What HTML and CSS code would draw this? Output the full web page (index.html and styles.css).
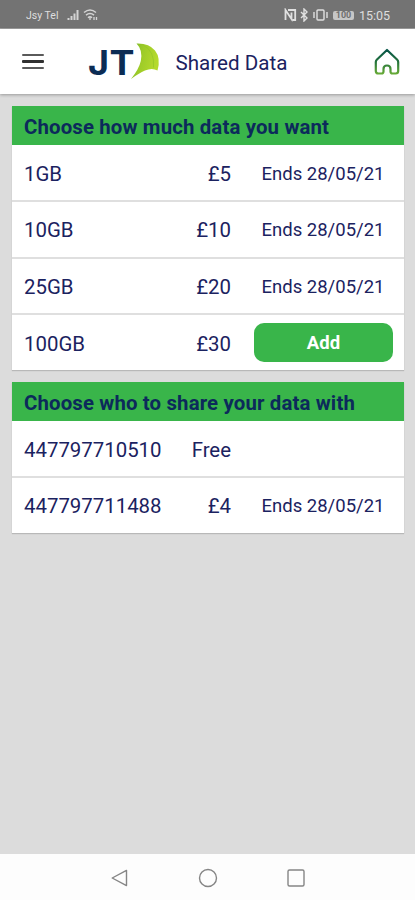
FILE: index.html
```html
<!DOCTYPE html>
<html lang="en">
<head>
<meta charset="utf-8">
<title>Shared Data</title>
<link rel="stylesheet" href="styles.css">
</head>
<body>
<div class="status">
  <span class="carrier">Jsy Tel</span>
  <svg class="signal" width="32" height="14" viewBox="0 0 32 14" fill="none" stroke="#d4d4d4">
    <path d="M1.500 12v-2M4.500 12V8M7.500 12V5.500M10.500 12V2" stroke-width="2"/>
    <path d="M17 4.500q6-5 12 0M19 7.200q4-3.300 8 0M21 9.700q2-1.700 4 0" stroke-width="1.500"/>
    <path d="M23 10v2M27 9v3M29.500 9v3" stroke-width="1.300"/>
  </svg>
  <div class="status-right">
    <svg width="46" height="14" viewBox="0 0 46 14" fill="none" stroke="#e0e0e0" stroke-width="1.400">
      <path d="M1.500 12V2l6 9V4.500M4 2h7.200V12H8.500" stroke-width="1.800"/>
      <path d="m17 4 6 6-3 3V1l3 3-6 6"/>
      <rect x="33" y="2" width="7" height="10" rx="1"/>
      <path d="M30 4v6M43 4v6"/>
    </svg>
    <span class="battery">100</span>
    <span class="clock">15:05</span>
  </div>
</div>
<header class="header">
  <div class="menu"><i></i><i></i><i></i></div>
  <svg class="logo" width="76" height="42" viewBox="0 0 76 42">
    <defs>
      <linearGradient id="leaf" x1="0" y1="0" x2="1" y2="0.300">
        <stop offset="0" stop-color="#75b82a"/><stop offset="0.450" stop-color="#9dcb28"/><stop offset="1" stop-color="#b5da2c"/>
      </linearGradient>
    </defs>
    <text class="logo-text" x="2" y="34.500" textLength="21" lengthAdjust="spacingAndGlyphs">J</text>
    <text class="logo-text" x="23.500" y="34.500" textLength="25" lengthAdjust="spacingAndGlyphs">T</text>
    <path fill="url(#leaf)" d="M50.500 3.500Q63 3 69 10.500Q75 18 71.500 30.500Q66 27.500 59 30.500Q53 33 45 39Q53 29 54.800 21Q57 10 50.500 3.500Z"/>
    <path fill="none" stroke="#92c627" stroke-width="0.700" d="M57 5Q69 11 67.500 27.500"/>
  </svg>
  <h1 class="title">Shared Data</h1>
  <svg class="home" width="28" height="30" viewBox="0 0 28 30" fill="none">
    <defs>
      <linearGradient id="roof" x1="0" y1="0" x2="0" y2="1">
        <stop offset="0" stop-color="#075548"/><stop offset="0.500" stop-color="#23723c"/><stop offset="1" stop-color="#65a936"/>
      </linearGradient>
    </defs>
    <path stroke="url(#roof)" stroke-width="2.200" stroke-linejoin="round" d="M14 3 24 12.500Q25.200 13.700 25.200 15V24Q25.200 26.500 22.700 26.500H19.500Q17.500 26.500 17.500 24.500V22Q17.500 18.500 14 18.500T10.500 22V24.500Q10.500 26.500 8.500 26.500H5.300Q2.800 26.500 2.800 24V15Q2.800 13.700 4 12.500Z"/>
  </svg>
</header>
<main class="content">
  <section class="panel">
    <h2>Choose how much data you want</h2>
    <div class="row"><span>1GB</span><span class="price">£5</span><span class="end">Ends 28/05/21</span></div>
    <div class="row"><span>10GB</span><span class="price">£10</span><span class="end">Ends 28/05/21</span></div>
    <div class="row"><span>25GB</span><span class="price">£20</span><span class="end">Ends 28/05/21</span></div>
    <div class="row"><span>100GB</span><span class="price">£30</span><button class="add">Add</button></div>
  </section>
  <section class="panel">
    <h2>Choose who to share your data with</h2>
    <div class="row"><span>447797710510</span><span class="price">Free</span></div>
    <div class="row"><span>447797711488</span><span class="price">£4</span><span class="end">Ends 28/05/21</span></div>
  </section>
</main>
<nav class="nav">
  <svg width="20" height="20" viewBox="0 0 20 20"><path d="M16.500 2.400V17.600L2.200 10Z"/></svg>
  <svg width="20" height="20" viewBox="0 0 20 20"><circle cx="10" cy="10" r="8.500"/></svg>
  <svg width="20" height="20" viewBox="0 0 20 20"><rect x="2" y="2" width="16" height="16" rx="1.500"/></svg>
</nav>
</body>
</html>
```

FILE: styles.css
```css
* { box-sizing: border-box; }
body {
  margin: 0;
  height: 900px;
  display: flex;
  flex-direction: column;
  overflow: hidden;
  background: #dcdcdc;
  color: #1b2260;
  font-family: Roboto, sans-serif;
}
.status {
  height: 29px;
  flex: none;
  display: flex;
  align-items: center;
  padding: 2px 24px 0 26px;
  background: #737373;
  border-bottom: 1px solid #a0a0a0;
  color: #dedede;
}
.carrier { width: 41px; font-size: 10.5px; white-space: nowrap; }
.status-right { margin-left: auto; display: flex; align-items: center; }
.battery {
  width: 21px;
  height: 9px;
  margin: 0 5px 0 3px;
  border-radius: 2px;
  background: #c6c6c6;
  color: #707070;
  font-size: 9px;
  font-weight: 700;
  line-height: 9px;
  text-align: center;
}
.clock { width: 32px; font-size: 12.5px; white-space: nowrap; }
.header {
  height: 65px;
  flex: none;
  display: flex;
  align-items: center;
  padding: 0 14px 0 22px;
  background: #fff;
  box-shadow: 0 1px 3px rgba(0, 0, 0, 0.3);
}
.menu { width: 22px; display: grid; gap: 4px; }
.menu i { height: 2.4px; border-radius: 1px; background: #5a5a5a; }
.menu i:nth-child(2) { background: #303030; }
.logo { margin: -2px 0 0 42px; }
.logo-text { font: 700 34px Inter, sans-serif; fill: #0b2c54; }
.title { margin: 3px 0 0 13.500px; font-size: 20.6px; font-weight: 400; white-space: nowrap; }
.home { margin-left: auto; }
.content { flex: 1; padding: 12px 11px 0 12px; }
.panel { margin-bottom: 11.5px; background: #fff; box-shadow: 0 1px 1px rgba(0, 0, 0, 0.16); }
.panel h2 {
  height: 39px;
  margin: 0;
  padding: 2px 12px 0;
  background: #39b54a;
  color: #0c2a5b;
  font-size: 20.4px;
  font-weight: 700;
  letter-spacing: 0.14px;
  line-height: 38px;
  white-space: nowrap;
}
.row {
  height: 56.5px;
  display: grid;
  grid-template-columns: 142px 65px 1fr;
  align-items: center;
  padding: 2px 0 0 12px;
  border-bottom: 2px solid #dfdfdf;
  font-size: 20.4px;
}
.panel h2 + .row { height: 57px; padding-top: 3px; }
.row:last-child { height: 55px; border-bottom: 0; }
.price { text-align: right; }
.end { margin-left: 30.500px; font-size: 18.5px; white-space: nowrap; }
.add {
  width: 139px;
  height: 39px;
  margin: -2px 0 0 23px;
  padding: 1px 0 0;
  border: 0;
  border-radius: 10px;
  background: #39b54a;
  color: #fff;
  font: 700 18.5px Roboto, sans-serif;
}
.nav {
  height: 46px;
  flex: none;
  display: flex;
  justify-content: center;
  align-items: center;
  gap: 68px;
  padding-top: 2px;
  background: #fdfdfd;
}
.nav svg { fill: none; stroke: #858585; stroke-width: 1.4; stroke-linejoin: round; }
```
